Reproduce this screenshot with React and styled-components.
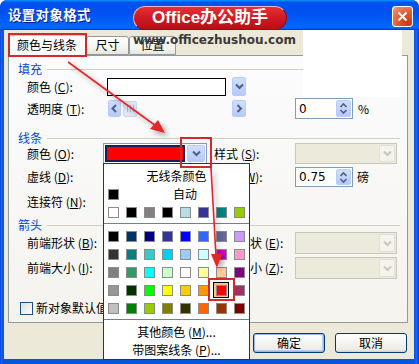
import React from 'react';
import styled, { createGlobalStyle } from 'styled-components';

const UI = `"Noto Sans CJK SC", "Noto Sans", sans-serif`;

const Global = createGlobalStyle`
  html, body { margin: 0; padding: 0; background: #fff; }
  body { width: 419px; height: 364px; overflow: hidden; font-family: ${UI}; }
  * { box-sizing: border-box; }
`;

const Window = styled.div`
  position: relative;
  width: 419px;
  height: 364px;
  display: flex;
  flex-direction: column;
  background: linear-gradient(90deg, #0831d9 0, #166aee 1px, #0855dd 3px, #0855dd 414px, #166aee 417px, #0831d9 419px);
  border-radius: 7px 7px 0 0;
  overflow: hidden;
  font-family: ${UI};
`;

const TitleBar = styled.div`
  height: 30px;
  flex: none;
  display: flex;
  align-items: flex-start;
  padding: 0 6px 0 8px;
  background: linear-gradient(180deg, #0997ff, #0053ee 8%, #0050ee 40%, #0066ff 88%, #0066ff 93%, #005bff 95%, #003dd7 96%, #003dd7);
`;

const Title = styled.div`
  width: 125px;
  margin-top: 6px;
  color: #fff;
  font-weight: 700;
  font-size: 13.5px;
  line-height: 17px;
  letter-spacing: 0.3px;
  text-shadow: 1px 1px 0 #0a1883;
`;

const Pill = styled.div`
  width: 154px;
  height: 24px;
  margin-top: 6px;
  border-radius: 12px;
  background: linear-gradient(180deg, #e53036 0%, #d01a22 50%, #b80e16 100%);
  border: 1px solid #f4b8b8;
  border-right-color: #9b0c10;
  border-bottom-color: #a00c12;
  color: #fff;
  font-weight: 700;
  font-size: 17px;
  line-height: 21px;
  text-align: center;
  font-family: "Liberation Sans", "Noto Sans CJK SC", sans-serif;
`;

const Spacer = styled.div`
  flex: 1;
`;

const CloseBtn = styled.div`
  width: 21px;
  height: 21px;
  margin-top: 6px;
  border: 1px solid #fff;
  border-radius: 3px;
  background: radial-gradient(circle at 80% 85%, #c7391a 0, #dc5a32 45%, #e98a6a 85%, #f6c3b0 100%);
  display: flex;
  align-items: center;
  justify-content: center;
`;

const Client = styled.div`
  flex: 1;
  margin: 0 5px 5px 4px;
  background: #ece9d8;
  padding: 3px 6px 0 4px;
  display: flex;
  flex-direction: column;
`;

const Tabs = styled.div`
  height: 22px;
  display: flex;
  align-items: flex-end;
  position: relative;
  z-index: 1;
`;

const Tab = styled.div`
  width: ${p => p.$w}px;
  height: ${p => (p.$active ? 23 : 19)}px;
  margin-bottom: ${p => (p.$active ? -1 : 0)}px;
  border: 1px solid #919b9c;
  border-bottom: ${p => (p.$active ? 'none' : '1px solid #919b9c')};
  border-top: ${p => (p.$active ? '3px solid #ffc83c' : '1px solid #919b9c')};
  border-radius: 3px 3px 0 0;
  background: ${p => (p.$active ? '#fcfcfe' : 'linear-gradient(180deg, #ffffff, #f3f3ef 70%, #e6e5de)')};
  font-size: 12px;
  line-height: ${p => (p.$active ? 17 : 16)}px;
  text-align: center;
  color: #000;
`;

const Panel = styled.div`
  width: 400px;
  height: 268px;
  border: 1px solid #919b9c;
  background: linear-gradient(180deg, #fcfcfe, #f4f3ee);
  padding: 0 7px 0 9px;
  display: flex;
  flex-direction: column;
`;

const Heading = styled.div`
  display: flex;
  align-items: center;
  height: 14px;
  margin-top: ${p => p.$mt}px;
  color: #0046d5;
  font-size: 12px;
  line-height: 14px;
  &::after {
    content: '';
    flex: 1;
    height: 1px;
    margin-left: 5px;
    background: #d0d0bf;
  }
`;

const Row = styled.div`
  display: flex;
  align-items: center;
  height: ${p => p.$h}px;
  margin-top: ${p => p.$mt}px;
  padding-left: ${p => (p.$indent ?? 9)}px;
`;

const Label = styled.div`
  width: ${p => p.$w}px;
  flex: none;
  font-size: 12px;
  line-height: 14px;
  white-space: nowrap;
  color: #000;
`;

const ColorBox = styled.div`
  width: 119px;
  height: 18px;
  border: 1px solid #000;
  background: #fff;
`;

const DropBtn = styled.div`
  width: ${p => p.$w || 14}px;
  height: ${p => p.$h || 19}px;
  margin-left: ${p => p.$ml || 0}px;
  flex: none;
  border: 1px solid ${p => (p.$disabled ? '#e2e0d4' : '#b9ccf9')};
  border-radius: 2px;
  background: ${p => (p.$disabled ? '#f4f3ee' : 'linear-gradient(180deg, #d2defc, #b6c9f7)')};
  display: flex;
  align-items: center;
  justify-content: center;
`;

const Slider = styled.div`
  width: 138px;
  height: 17px;
  display: flex;
  align-items: center;
`;

const Thumb = styled.div`
  width: 14px;
  height: 16px;
  margin-left: 2px;
  border: 1px solid #cdd7ee;
  border-radius: 2px;
  background: #dfe6f6;
  display: flex;
  align-items: center;
  justify-content: center;
  gap: 2px;
  & > i {
    width: 1px;
    height: 7px;
    background: #a9b7d9;
  }
`;

const Track = styled.div`
  flex: 1;
`;

const Gap = styled.div`
  width: ${p => p.$w}px;
  flex: none;
`;

const Spin = styled.div`
  width: 58px;
  height: ${p => p.$h}px;
  flex: none;
  border: 1px solid #7f9db9;
  background: #fff;
  display: flex;
  align-items: center;
  padding: 1px 1px 1px 3px;
  font-size: 12px;
  font-family: "DejaVu Sans", sans-serif;
`;

const SpinText = styled.div`
  flex: 1;
  font-size: 12px;
  line-height: 14px;
`;

const SpinBtn = styled.div`
  width: 15px;
  height: 100%;
  border: 1px solid #b9ccf9;
  border-radius: 2px;
  background: linear-gradient(180deg, #d2defc, #b6c9f7);
  display: flex;
  align-items: center;
  justify-content: center;
`;

const Unit = styled.div`
  margin-left: ${p => p.$ml}px;
  font-size: 12px;
  line-height: 14px;
`;

const LineCombo = styled.div`
  width: 104px;
  height: 21px;
  flex: none;
  border: 1px solid #7f9db9;
  background: #fff;
  padding: 1px;
  display: flex;
  gap: 2px;
`;

const ColorField = styled.div`
  flex: 1;
  background: #17205f;
  padding: 2px;
  & > div {
    width: 100%;
    height: 100%;
    background: #ff0000;
  }
`;

const DisabledCombo = styled.div`
  width: 102px;
  height: ${p => p.$h}px;
  flex: none;
  border: 1px solid #c9c7ba;
  background: #ebeadb;
  padding: 1px;
  display: flex;
  justify-content: flex-end;
`;

const Check = styled.div`
  width: 13px;
  height: 13px;
  flex: none;
  border: 1px solid #1c5180;
  background: linear-gradient(135deg, #dcdcd7, #ffffff);
  margin-right: 3px;
`;

const ButtonRow = styled.div`
  display: flex;
  justify-content: flex-end;
  gap: 10px;
  margin-top: 10px;
  padding-right: 1px;
`;

const Button = styled.div`
  width: 72px;
  height: 20px;
  border: 1px solid #003c74;
  border-radius: 3px;
  background: linear-gradient(180deg, #ffffff, #ecebe6 86%, #d6d0c5);
  box-shadow: ${p => (p.$default ? 'inset 0 0 0 1px #98b8f2, inset -1px -1px 0 1px #bccbf5' : 'none')};
  font-size: 12px;
  line-height: 18px;
  text-align: center;
  color: #000;
`;

/* ---- overlays ---- */

const Watermark = styled.div`
  position: absolute;
  left: 133px;
  top: 32px;
  font-family: "DejaVu Sans", "Liberation Sans", sans-serif;
  font-weight: 700;
  font-size: 12px;
  line-height: 16px;
  color: #3a3a3a;
  z-index: 3;
`;

const WhitePatch = styled.div`
  position: absolute;
  left: 303px;
  top: 30px;
  width: 99px;
  height: 67px;
  background: #fff;
  z-index: 2;
`;

const Popup = styled.div`
  position: absolute;
  left: 103px;
  top: 163px;
  width: 147px;
  height: 197px;
  border: 1px solid #17337f;
  background: #fff;
  display: flex;
  flex-direction: column;
  padding-top: 3px;
  z-index: 4;
`;

const MenuItem = styled.div`
  height: 18px;
  font-size: 12px;
  line-height: 18px;
  text-align: center;
  color: #000;
  margin-top: ${p => p.$mt || 0}px;
`;

const AutoRow = styled.div`
  height: 18px;
  display: flex;
  align-items: center;
  padding-left: 4px;
`;

const AutoText = styled.div`
  margin-left: 54px;
  font-size: 12px;
  line-height: 14px;
`;

const SwatchRow = styled.div`
  display: flex;
`;

const Cell = styled.div`
  width: 18px;
  height: 18px;
  padding: 4px 0 0 4px;
  ${p => p.$selected && `
    padding: 2px 0 0 2px;
    margin: 1px;
    width: 16px;
    height: 16px;
    border: 1px solid #000;
    background: #fcc28f;
  `}
`;

const CellSlot = styled.div`
  width: 18px;
  height: 18px;
`;

const Swatch = styled.div`
  width: 11px;
  height: 11px;
  border: 1px solid #8c8c8c;
  background: ${p => p.$c};
`;

const Separator = styled.div`
  height: 1px;
  margin: ${p => p.$m};
  background: #6d7fa8;
`;

const RedBox = styled.div`
  position: absolute;
  left: ${p => p.$x}px;
  top: ${p => p.$y}px;
  width: ${p => p.$w}px;
  height: ${p => p.$h}px;
  border: 2px solid #d22a2a;
  z-index: 6;
  pointer-events: none;
`;

const ArrowLayer = styled.svg`
  position: absolute;
  left: 0;
  top: 0;
  z-index: 7;
  pointer-events: none;
`;

const Chevron = ({ dir = 'down', color = '#4d6185' }) => {
  const d = {
    down: 'M1 1.5 L4.5 5 L8 1.5',
    left: 'M5 1 L1.5 4.5 L5 8',
    right: 'M1.5 1 L5 4.5 L1.5 8',
  }[dir];
  const size = dir === 'down' ? [9, 7] : [7, 9];
  return (
    <svg width={size[0]} height={size[1]} viewBox={`0 0 ${size[0]} ${size[1]}`}>
      <path d={d} fill="none" stroke={color} strokeWidth="2" />
    </svg>
  );
};

const UpDown = () => (
  <svg width="9" height="13" viewBox="0 0 9 13">
    <path d="M1.5 5 L4.5 2 L7.5 5 M1.5 8 L4.5 11 L7.5 8" fill="none" stroke="#4d6185" strokeWidth="1.6" />
  </svg>
);

const staticRow = ['#FFFFFF', '#000000', '#808080', '#000000', '#B7DDE6', '#333399', '#008080', '#99CC00'];
const grid = [
  ['#000000', '#003366', '#000080', '#333399', '#0000FF', '#3366FF', '#666699', '#CC99FF'],
  ['#333333', '#008080', '#33CCCC', '#00CCFF', '#99CCFF', '#CCFFFF', '#CC00CC', '#FF99CC'],
  ['#808080', '#339966', '#00FFFF', '#CCFFCC', '#FFFFFF', '#FFFF99', '#FFCC99', '#800080'],
  ['#969696', '#003300', '#00FF00', '#FFFF00', '#FFCC00', '#FF9900', '#FF0000', '#993366'],
  ['#C0C0C0', '#008000', '#99CC00', '#808000', '#333300', '#FF6600', '#993300', '#800000'],
];

export default function App() {
  return (
    <>
      <Global />
      <Window>
        <TitleBar>
          <Title>设置对象格式</Title>
          <Pill>Office办公助手</Pill>
          <Spacer />
          <CloseBtn>
            <svg width="11" height="11" viewBox="0 0 11 11">
              <path d="M1.5 1.5 L9.5 9.5 M9.5 1.5 L1.5 9.5" stroke="#fff" strokeWidth="2" />
            </svg>
          </CloseBtn>
        </TitleBar>
        <Client>
          <Tabs>
            <Tab $active $w={78}>颜色与线条</Tab>
            <Tab $w={43}>尺寸</Tab>
            <Tab $w={47}>位置</Tab>
          </Tabs>
          <Panel>
            <Heading $mt={6}>填充</Heading>
            <Row $h={19} $mt={1}>
              <Label $w={80}>颜色 (<u>C</u>):</Label>
              <ColorBox />
              <DropBtn $ml={6}><Chevron /></DropBtn>
            </Row>
            <Row $h={21} $mt={2}>
              <Label $w={81}>透明度 (<u>T</u>):</Label>
              <Slider>
                <DropBtn $w={13} $h={17}><Chevron dir="left" /></DropBtn>
                <Thumb><i /><i /><i /></Thumb>
                <Track />
                <DropBtn $w={14} $h={17}><Chevron dir="right" /></DropBtn>
              </Slider>
              <Gap $w={49} />
              <Spin $h={21}>
                <SpinText>0</SpinText>
                <SpinBtn><UpDown /></SpinBtn>
              </Spin>
              <Unit $ml={5}>%</Unit>
            </Row>

            <Heading $mt={12}>线条</Heading>
            <Row $h={21} $mt={-2}>
              <Label $w={76}>颜色 (<u>O</u>):</Label>
              <LineCombo>
                <ColorField><div /></ColorField>
                <DropBtn $w={18} $h={17}><Chevron /></DropBtn>
              </LineCombo>
              <Gap $w={7} />
              <Label $w={81}>样式 (<u>S</u>):</Label>
              <DisabledCombo $h={21}>
                <DropBtn $w={16} $h={17} $disabled><Chevron color="#c9c7ba" /></DropBtn>
              </DisabledCombo>
            </Row>
            <Row $h={20} $mt={3}>
              <Label $w={187}>虚线 (<u>D</u>):</Label>
              <Label $w={81}>粗细 (<u>W</u>):</Label>
              <Spin $h={20}>
                <SpinText>0.75</SpinText>
                <SpinBtn><UpDown /></SpinBtn>
              </Spin>
              <Unit $ml={4}>磅</Unit>
            </Row>
            <Row $h={19} $mt={5}>
              <Label $w={187}>连接符 (<u>N</u>):</Label>
            </Row>

            <Heading $mt={7}>箭头</Heading>
            <Row $h={22} $mt={0}>
              <Label $w={187}>前端形状 (<u>B</u>):</Label>
              <Label $w={81}>末端形状 (<u>E</u>):</Label>
              <DisabledCombo $h={22}>
                <DropBtn $w={16} $h={18} $disabled><Chevron color="#c9c7ba" /></DropBtn>
              </DisabledCombo>
            </Row>
            <Row $h={22} $mt={3}>
              <Label $w={187}>前端大小 (<u>I</u>):</Label>
              <Label $w={81}>末端大小 (<u>Z</u>):</Label>
              <DisabledCombo $h={22}>
                <DropBtn $w={16} $h={18} $disabled><Chevron color="#c9c7ba" /></DropBtn>
              </DisabledCombo>
            </Row>

            <Row $h={14} $mt={22} $indent={2}>
              <Check />
              <Label $w={120}>新对象默认值 (<u>F</u>)</Label>
            </Row>
          </Panel>
          <ButtonRow>
            <Button $default>确定</Button>
            <Button>取消</Button>
          </ButtonRow>
        </Client>

        <WhitePatch />
        <Watermark>www.officezhushou.com</Watermark>

        <Popup>
          <MenuItem>无线条颜色</MenuItem>
          <AutoRow>
            <Swatch $c="#000000" />
            <AutoText>自动</AutoText>
          </AutoRow>
          <SwatchRow>
            {staticRow.map((c, i) => (
              <Cell key={i}><Swatch $c={c} /></Cell>
            ))}
          </SwatchRow>
          <Separator $m="2px 0 3px" />
          {grid.map((row, r) => (
            <SwatchRow key={r}>
              {row.map((c, i) =>
                r === 3 && i === 6 ? (
                  <CellSlot key={i}>
                    <Cell $selected><Swatch $c={c} /></Cell>
                  </CellSlot>
                ) : (
                  <Cell key={i}><Swatch $c={c} /></Cell>
                )
              )}
            </SwatchRow>
          ))}
          <Separator $m="2px 0 0" />
          <MenuItem $mt={3}>其他颜色 (<u>M</u>)...</MenuItem>
          <MenuItem>带图案线条 (<u>P</u>)...</MenuItem>
        </Popup>

        <RedBox $x={8} $y={33} $w={79} $h={24} />
        <RedBox $x={180} $y={137} $w={32} $h={31} />
        <RedBox $x={208} $y={278} $w={27} $h={23} />

        <ArrowLayer width="419" height="364" viewBox="0 0 419 364">
          <defs>
            <filter id="sh" x="-20%" y="-20%" width="140%" height="140%">
              <feDropShadow dx="3" dy="3" stdDeviation="2.5" floodColor="#000" floodOpacity="0.35" />
            </filter>
          </defs>
          <g filter="url(#sh)">
            <line x1="68" y1="62" x2="156" y2="126" stroke="#e2262b" strokeWidth="1.6" />
            <polygon points="165,133 150,129 158,120" fill="#e2262b" />
            <line x1="211" y1="168" x2="216" y2="256" stroke="#e2262b" strokeWidth="1.6" />
            <polygon points="217,268 211,254 222,254" fill="#e2262b" />
          </g>
        </ArrowLayer>
      </Window>
    </>
  );
}
